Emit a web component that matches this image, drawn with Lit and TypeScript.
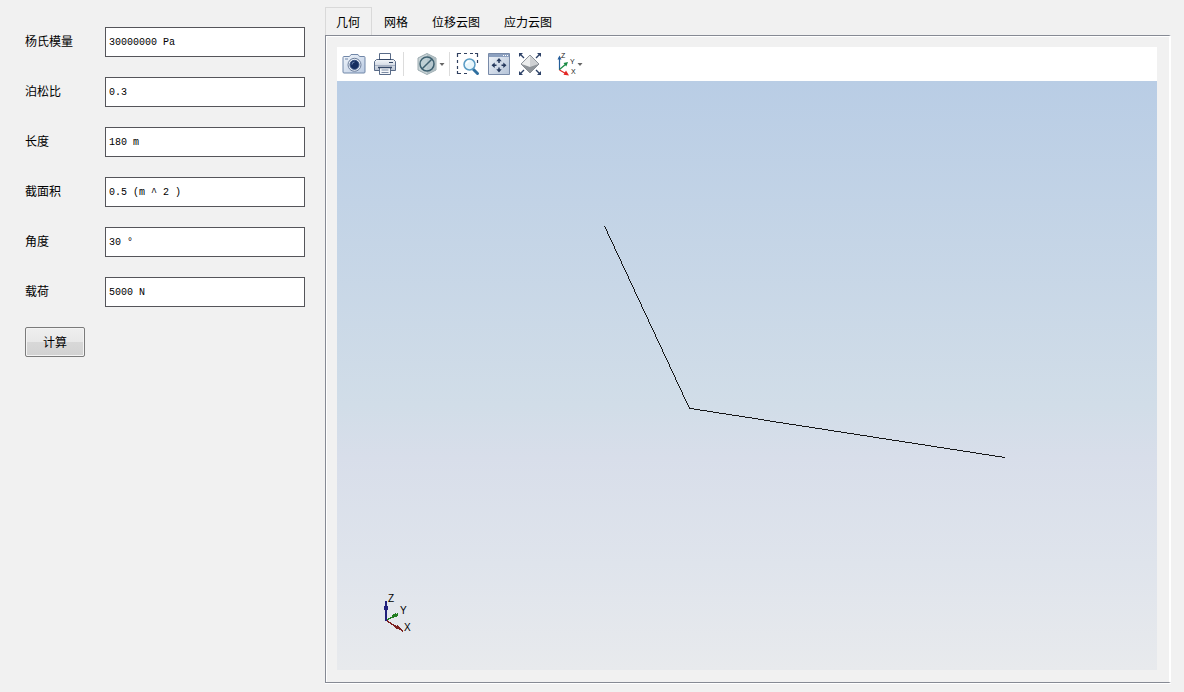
import { LitElement, html, svg, css } from "lit";
import { customElement, state } from "lit/decorators.js";

const FIELDS = [
  { id: "modulus", label: "杨氏模量", value: "30000000 Pa" },
  { id: "poisson", label: "泊松比", value: "0.3" },
  { id: "length", label: "长度", value: "180 m" },
  { id: "area", label: "截面积", value: "0.5 (m ^ 2 )" },
  { id: "angle", label: "角度", value: "30 °" },
  { id: "load", label: "载荷", value: "5000 N" },
];

const TABS = ["几何", "网格", "位移云图", "应力云图"];

@customElement("model-form")
class ModelForm extends LitElement {
  static styles = css`
    :host {
      display: block;
    }
    .form {
      display: flex;
      flex-direction: column;
      align-items: flex-start;
      gap: 20px;
    }
    .row {
      display: grid;
      grid-template-columns: 80px 200px;
      align-items: center;
    }
    .label {
      padding-bottom: 2px;
      font-size: 12px;
    }
    .input {
      box-sizing: border-box;
      width: 100%;
      height: 30px;
      padding: 0 3px;
      border: 1px solid #55555a;
      border-radius: 0;
      background: #fff;
      color: #000;
      font: 10px "Liberation Mono", "Noto Sans CJK SC", monospace;
      outline: none;
    }
    .button {
      box-sizing: border-box;
      width: 60px;
      height: 30px;
      padding: 0 0 2px;
      border: 1px solid #7b7b7b;
      border-radius: 2px;
      background: linear-gradient(#efefef, #e8e8e8 50%, #d8d8d8 50%, #d2d2d2);
      box-shadow: inset 0 0 0 1px #f4f4f4;
      color: #000;
      font: 12px "Noto Sans CJK SC", sans-serif;
    }
  `;

  render() {
    return html`<form class="form" @submit=${(e: Event) => e.preventDefault()}>
      ${FIELDS.map(
        (f) => html`<div class="row">
          <label class="label" for=${f.id}>${f.label}</label>
          <input class="input" id=${f.id} type="text" .value=${f.value} />
        </div>`
      )}
      <button class="button" type="submit">计算</button>
    </form>`;
  }
}

@customElement("view-toolbar")
class ViewToolbar extends LitElement {
  static styles = css`
    :host {
      display: block;
    }
    .bar {
      display: flex;
      align-items: center;
      height: 34px;
      padding: 0 5px;
      background: #fff;
    }
    .group {
      display: flex;
      gap: 7px;
    }
    .tool {
      display: flex;
      align-items: center;
      height: 24px;
      padding: 0;
      border: 0;
      background: none;
    }
    .tool svg {
      display: block;
    }
    .sep {
      width: 1px;
      height: 24px;
      background: #dcdcdc;
      margin: 0 6px;
    }
    .sep.wide {
      margin-right: 11px;
    }
    .sep.narrow {
      margin-left: 4px;
    }
    .axes {
      margin-left: 7px;
    }
  `;

  private arrow = html`<svg width="6" height="24" viewBox="0 0 6 24"><path d="M0.500 11h5L3 14z" fill="#666" /></svg>`;

  private camera = html`<svg width="24" height="24" viewBox="0 0 24 24">
    <defs><linearGradient id="c" x2="1" y2="1"><stop stop-color="#f2f6fb" /><stop offset="1" stop-color="#b9cae2" /></linearGradient></defs>
    <path d="M2 4.500h5.500l1.500-2h7l1.500 2H22q1 0 1 1V20q0 1-1 1H2q-1 0-1-1V5.500q0-1 1-1z" fill="url(#c)" stroke="#7187a8" />
    <path d="M3 7h3" stroke="#7187a8" />
    <circle cx="12.500" cy="12.800" r="6.500" fill="#e6edf6" stroke="#6e7f9c" />
    <circle cx="12.500" cy="12.800" r="4.500" fill="#172f60" stroke="#36507f" />
    <path d="M10 12.500a2.500 2.500 0 0 1 2.500-2.500" fill="none" stroke="#6f88b2" />
  </svg>`;

  private printer = html`<svg width="24" height="24" viewBox="0 0 24 24">
    <defs><linearGradient id="p" x2="0" y2="1"><stop stop-color="#f4f6f9" /><stop offset="1" stop-color="#b9c3d2" /></linearGradient></defs>
    <path d="M6.500 8V1.500h11V8" fill="#fff" stroke="#596b88" />
    <path d="M3.500 7.500h17l2 2v9h-21v-9z" fill="url(#p)" stroke="#596b88" />
    <path d="M6 7.500h12" stroke="#344766" />
    <path d="M2 13.500h20" stroke="#a5b0c2" />
    <path d="M16 10.500h4" stroke="#344766" />
    <path d="M6.500 15.500h11v7h-11z" fill="#f5f7fa" stroke="#596b88" />
    <path d="M5 15.500h14" stroke="#344766" stroke-width="1.500" />
    <path d="M8.500 18h7M8.500 20.500h7" stroke="#7d8ca4" />
  </svg>`;

  private hidden3d = html`<svg width="24" height="24" viewBox="0 0 24 24">
    <path d="M12 1.500l9 4.500v12l-9 4.500L3 18V6z" fill="#cad5d8" stroke="#9cabb0" />
    <path d="M12 2v20l8.500-4.300V6.300z" fill="#afbdc2" />
    <circle cx="12" cy="12" r="7" fill="#bacdd4" fill-opacity=".7" stroke="#3d6070" stroke-width="1.500" />
    <path d="M7.200 16.800l9.600-9.600" stroke="#3d6070" stroke-width="1.500" />
  </svg>`;

  private zoomBox = html`<svg width="24" height="24" viewBox="0 0 24 24">
    <path d="M1.500 5V1.500H5M8 1.500h3M14 1.500h3M19 1.500h2.500V5M1.500 8v3M1.500 14v3M1.500 19v2.500H5M8 21.500h3M21.500 8v3" fill="none" stroke="#30405f" stroke-width="1.200" />
    <path d="M17.500 17.500l4 4" stroke="#2f6f9f" stroke-width="3" stroke-linecap="round" />
    <circle cx="13.500" cy="12.500" r="5.500" fill="#e7f6fc" stroke="#5a9cc5" stroke-width="1.500" />
    <path d="M10.500 12a3 3 0 0 1 3-2.700" fill="none" stroke="#fff" stroke-width="1.500" />
  </svg>`;

  private pan = html`<svg width="24" height="24" viewBox="0 0 24 24">
    <defs><linearGradient id="w" x2="1" y2="1"><stop stop-color="#f0f4f9" /><stop offset="1" stop-color="#b4c3d8" /></linearGradient></defs>
    <path d="M1.500 1.500h21v21h-21z" fill="url(#w)" stroke="#788aa8" />
    <path d="M2 2h20v3H2z" fill="#8ca0bf" />
    <path d="M16 3.500h1M18 3.500h1M20 3.500h1" stroke="#fff" />
    <path d="M12 6l2.700 3.200H9.300zM12 20.500l2.700-3.200H9.300zM4.500 13.200l3.200-2.700v5.400zM19.500 13.200l-3.200-2.700v5.400z" fill="#26395d" />
    <path d="M12 8v3M12 15.500v3M6.500 13.200h3M14.500 13.200h3" stroke="#26395d" stroke-width="1.500" />
  </svg>`;

  private fit = html`<svg width="24" height="24" viewBox="0 0 24 24">
    <path d="M12 3l9 9-9 9-9-9z" fill="#d3d5d7" stroke="#858b92" />
    <path d="M3.500 12h17L12 21z" fill="#8f9499" />
    <path d="M12 3.500L3.500 12 12 15z" fill="#eceded" />
    <path d="M12 3.500l8.500 8.500L12 15z" fill="#cfd1d3" />
    <path d="M2 2l4 4M22 2l-4 4M2 22l4-4M22 22l-4-4" stroke="#2c4167" stroke-width="1.400" />
    <path d="M1 1h4L1 5zM23 1h-4l4 4zM1 23h4l-4-4zM23 23h-4l4-4z" fill="#2c4167" />
  </svg>`;

  private axes = html`<svg width="21" height="24" viewBox="0 0 21 24">
    <path d="M3.500 18V5" stroke="#245d9b" stroke-width="1.200" />
    <path d="M1.500 7.500l2-4 2 4z" fill="#245d9b" />
    <path d="M3.500 17.500L10 12" stroke="#188a43" stroke-width="1.200" />
    <path d="M12 10l-4.500 1 2.800 3.500z" fill="#188a43" />
    <path d="M3.500 18l7 4" stroke="#e32724" stroke-width="1.300" />
    <path d="M13 23.500l-5.500-.7 2.500-4.300z" fill="#e32724" />
    <g font-family="Liberation Sans, sans-serif" font-size="7" fill="#222">
      <text x="5" y="6">Z</text><text x="14" y="12">Y</text><text x="15" y="22">X</text>
    </g>
  </svg>`;

  render() {
    return html`<div class="bar" role="toolbar">
      <div class="group">
        <button class="tool" aria-label="截图">${this.camera}</button>
        <button class="tool" aria-label="打印">${this.printer}</button>
      </div>
      <span class="sep wide"></span>
      <button class="tool" aria-label="隐藏">${this.hidden3d}${this.arrow}</button>
      <span class="sep narrow"></span>
      <div class="group">
        <button class="tool" aria-label="框选缩放">${this.zoomBox}</button>
        <button class="tool" aria-label="平移">${this.pan}</button>
        <button class="tool" aria-label="适应窗口">${this.fit}</button>
        <button class="tool axes" aria-label="视图方向">${this.axes}${this.arrow}</button>
      </div>
    </div>`;
  }
}

@customElement("model-view")
class ModelView extends LitElement {
  static styles = css`
    :host {
      display: flex;
      min-height: 0;
      background: linear-gradient(#b9cde5, #d1dde8 55%, #d8deea 64%, #dfe4ec 82%, #e8eaed);
    }
    .scene {
      flex: 1;
      min-width: 0;
      min-height: 0;
    }
    .axis {
      font: 10px "Liberation Sans", sans-serif;
    }
  `;

  render() {
    return html`<svg class="scene" viewBox="0 0 820 589">
      ${svg`
        <polyline points="267.5,145 352.5,327.5 668,376.5" fill="none" stroke="#000" stroke-width=".9" shape-rendering="crispEdges" />
        <g shape-rendering="crispEdges">
          <path d="M49 520v20" stroke="#20207c" stroke-width="2" />
          <path d="M47 525h4v4h-4z" fill="#20207c" />
          <path d="M50 539l11-6" stroke="#207c20" stroke-width="1.500" />
          <path d="M54 535l5-3 2 3-5 2z" fill="#207c20" />
          <path d="M50 540l16 10" stroke="#7c2020" stroke-width="1.500" />
          <path d="M58 547l2-3 6 6z" fill="#7c2020" />
        </g>
        <text class="axis" x="51" y="521">Z</text>
        <text class="axis" x="63" y="533">Y</text>
        <text class="axis" x="67" y="550">X</text>
      `}
    </svg>`;
  }
}

@customElement("app-root")
class AppRoot extends LitElement {
  static styles = css`
    :host {
      display: block;
      background: #f1f1f1;
      color: #000;
      font: 12px/18px "Noto Sans CJK SC", sans-serif;
    }
    .page {
      box-sizing: border-box;
      min-height: 100vh;
      display: grid;
      grid-template-columns: 280px minmax(0, 1fr);
      column-gap: 20px;
      padding: 7px 13px 9px 25px;
    }
    .form {
      padding-top: 20px;
    }
    .side {
      display: flex;
      flex-direction: column;
      min-height: 0;
    }
    .tabs {
      display: flex;
    }
    .tab {
      box-sizing: border-box;
      height: 28px;
      padding: 0 11px;
      border: 1px solid transparent;
      border-bottom: 0;
      background: none;
      color: #000;
      font: inherit;
    }
    .tab.active {
      padding-left: 10px;
      border-color: #d9d9d9;
    }
    .frame {
      flex: 1;
      display: flex;
      flex-direction: column;
      padding: 11px 12px 12px 11px;
      border: 1px solid #868a94;
      border-right: 2px solid #fff;
      box-shadow: inset 1px 1px #fff, 0 1px #fff;
    }
    .view {
      flex: 1;
    }
  `;

  @state() private active = 0;

  render() {
    return html`<main class="page">
      <model-form class="form"></model-form>
      <section class="side">
        <div class="tabs" role="tablist">
          ${TABS.map(
            (t, i) => html`<button
              class="tab ${i === this.active ? "active" : ""}"
              role="tab"
              aria-selected=${i === this.active}
              @click=${() => (this.active = i)}
            >${t}</button>`
          )}
        </div>
        <div class="frame">
          <view-toolbar></view-toolbar>
          <model-view class="view"></model-view>
        </div>
      </section>
    </main>`;
  }
}
